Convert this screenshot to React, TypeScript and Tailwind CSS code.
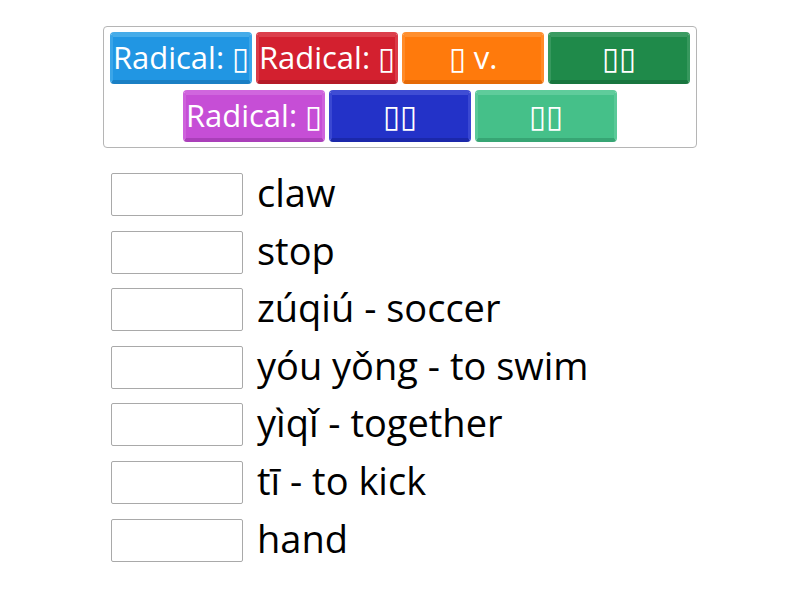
const tiles = [
  { label: "Radical: ▯", face: "bg-[#2196e3]", top: "border-t-[#46ace9]", side: "border-x-[#3aa5e8]", bottom: "border-b-[#1a7fc4]" },
  { label: "Radical: ▯", face: "bg-[#d3202f]", top: "border-t-[#dc3f4c]", side: "border-x-[#db3a47]", bottom: "border-b-[#b51a27]" },
  { label: "▯ v.", face: "bg-[#ff7a0c]", top: "border-t-[#ff8f2e]", side: "border-x-[#ff8b28]", bottom: "border-b-[#e56a06]" },
  { label: "▯▯", face: "bg-[#1f8a4a]", top: "border-t-[#3b9b62]", side: "border-x-[#37985e]", bottom: "border-b-[#19763f]" },
  { label: "Radical: ▯", face: "bg-[#c64ed6]", top: "border-t-[#d066de]", side: "border-x-[#ce62dc]", bottom: "border-b-[#aa3fb9]" },
  { label: "▯▯", face: "bg-[#2332c8]", top: "border-t-[#3f4dd4]", side: "border-x-[#3a48d2]", bottom: "border-b-[#1b28aa]" },
  { label: "▯▯", face: "bg-[#45c089]", top: "border-t-[#5fcc9b]", side: "border-x-[#5ac998]", bottom: "border-b-[#37a574]" },
];

const prompts = [
  "claw",
  "stop",
  "zúqiú - soccer",
  "yóu yǒng - to swim",
  "yìqǐ - together",
  "tī - to kick",
  "hand",
];

function Tile({ tile }: { tile: (typeof tiles)[number] }) {
  return (
    <div
      className={`flex h-[52px] w-[142px] items-center justify-center overflow-hidden whitespace-nowrap rounded-[4px] border-x-[3px] border-t-[5px] border-b-[4px] pb-[3px] text-[31px] leading-none text-white ${tile.face} ${tile.top} ${tile.side} ${tile.bottom}`}
    >
      {tile.label}
    </div>
  );
}

export default function App() {
  return (
    <div className="h-[600px] w-[800px] bg-white font-['Open_Sans','Noto_Sans',sans-serif] text-black">
      <div className="ml-[103px] w-[594px] pt-[26px]">
        <div className="flex flex-wrap justify-center gap-x-[4px] gap-y-[6px] rounded-[4px] border border-[#b5b5b5] p-[5px]">
          {tiles.map((tile, i) => (
            <Tile key={i} tile={tile} />
          ))}
        </div>
      </div>

      <div className="ml-[111px] mt-[25px] flex flex-col gap-[14.6px]">
        {prompts.map((text) => (
          <div key={text} className="flex items-center gap-[14px]">
            <div className="h-[43px] w-[132px] rounded-[2px] border border-[#a9a9a9] bg-white" />
            <span className="pb-[5px] text-[38px] leading-none">{text}</span>
          </div>
        ))}
      </div>
    </div>
  );
}
